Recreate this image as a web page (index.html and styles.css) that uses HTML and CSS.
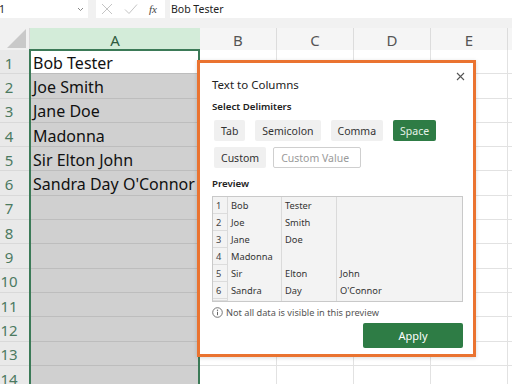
FILE: index.html
```html
<!DOCTYPE html>
<html>
<head>
<meta charset="utf-8">
<link rel="stylesheet" href="styles.css">
</head>
<body>
<div class="app">
  <div class="topbar">
    <div class="namebox"><span>1</span>
      <svg class="chev" width="7" height="5" viewBox="0 0 7 5"><path d="M1 1 L3.5 3.5 L6 1" fill="none" stroke="#888" stroke-width="1"/></svg>
    </div>
    <div class="fxbox">
      <svg width="12" height="12" viewBox="0 0 12 12"><path d="M1 1 L11 11 M11 1 L1 11" stroke="#c4c4c4" stroke-width="1" fill="none"/></svg>
      <svg width="14" height="12" viewBox="0 0 14 12"><path d="M1 6.5 L5 10.5 L13 1.5" stroke="#c4c4c4" stroke-width="1" fill="none"/></svg>
      <span class="fx">fx</span>
    </div>
    <div class="formula">Bob Tester</div>
  </div>
  <div class="gapband"></div>
  <div class="sheet">
    <div class="corner"><div class="tri"></div></div>
    <div class="colh sel">A</div>
    <div class="colh">B</div>
    <div class="colh">C</div>
    <div class="colh">D</div>
    <div class="colh">E</div>
    <div class="colh last"></div>

    <div class="rowh">1</div><div class="ca active">Bob Tester</div><div class="c"></div><div class="c"></div><div class="c"></div><div class="c"></div><div class="c last"></div>
    <div class="rowh">2</div><div class="ca">Joe Smith</div><div class="c"></div><div class="c"></div><div class="c"></div><div class="c"></div><div class="c last"></div>
    <div class="rowh">3</div><div class="ca">Jane Doe</div><div class="c"></div><div class="c"></div><div class="c"></div><div class="c"></div><div class="c last"></div>
    <div class="rowh">4</div><div class="ca">Madonna</div><div class="c"></div><div class="c"></div><div class="c"></div><div class="c"></div><div class="c last"></div>
    <div class="rowh">5</div><div class="ca">Sir Elton John</div><div class="c"></div><div class="c"></div><div class="c"></div><div class="c"></div><div class="c last"></div>
    <div class="rowh">6</div><div class="ca">Sandra Day O'Connor</div><div class="c"></div><div class="c"></div><div class="c"></div><div class="c"></div><div class="c last"></div>
    <div class="rowh">7</div><div class="ca"></div><div class="c"></div><div class="c"></div><div class="c"></div><div class="c"></div><div class="c last"></div>
    <div class="rowh">8</div><div class="ca"></div><div class="c"></div><div class="c"></div><div class="c"></div><div class="c"></div><div class="c last"></div>
    <div class="rowh">9</div><div class="ca"></div><div class="c"></div><div class="c"></div><div class="c"></div><div class="c"></div><div class="c last"></div>
    <div class="rowh">10</div><div class="ca"></div><div class="c"></div><div class="c"></div><div class="c"></div><div class="c"></div><div class="c last"></div>
    <div class="rowh">11</div><div class="ca"></div><div class="c"></div><div class="c"></div><div class="c"></div><div class="c"></div><div class="c last"></div>
    <div class="rowh">12</div><div class="ca"></div><div class="c"></div><div class="c"></div><div class="c"></div><div class="c"></div><div class="c last"></div>
    <div class="rowh">13</div><div class="ca"></div><div class="c"></div><div class="c"></div><div class="c"></div><div class="c"></div><div class="c last"></div>
    <div class="rowh">14</div><div class="ca"></div><div class="c"></div><div class="c"></div><div class="c"></div><div class="c"></div><div class="c last"></div>

    <div class="selframe"></div>
  </div>

  <div class="dialog">
    <svg class="close" width="9" height="9" viewBox="0 0 9 9"><path d="M1 1 L8 8 M8 1 L1 8" stroke="#555" stroke-width="1.1" fill="none"/></svg>
    <div class="title">Text to Columns</div>
    <div class="label">Select Delimiters</div>
    <div class="btnrow">
      <span class="btn">Tab</span>
      <span class="btn">Semicolon</span>
      <span class="btn">Comma</span>
      <span class="btn on">Space</span>
    </div>
    <div class="btnrow row2">
      <span class="btn">Custom</span>
      <span class="input">Custom Value</span>
    </div>
    <div class="label plabel">Preview</div>
    <div class="preview">
      <div class="pn">1</div><div class="pc">Bob</div><div class="pc">Tester</div><div class="pc"></div>
      <div class="pn">2</div><div class="pc">Joe</div><div class="pc">Smith</div><div class="pc"></div>
      <div class="pn">3</div><div class="pc">Jane</div><div class="pc">Doe</div><div class="pc"></div>
      <div class="pn">4</div><div class="pc">Madonna</div><div class="pc"></div><div class="pc"></div>
      <div class="pn">5</div><div class="pc">Sir</div><div class="pc">Elton</div><div class="pc">John</div>
      <div class="pn">6</div><div class="pc">Sandra</div><div class="pc">Day</div><div class="pc">O'Connor</div>
      <div class="pn"></div><div class="pc"></div><div class="pc"></div><div class="pc"></div>
    </div>
    <div class="info">
      <svg width="11" height="11" viewBox="0 0 11 11"><circle cx="5.5" cy="5.5" r="4.8" fill="none" stroke="#666" stroke-width="0.9"/><circle cx="5.5" cy="3.2" r="0.7" fill="#666"/><path d="M5.5 4.8 V8.2" stroke="#666" stroke-width="1"/></svg>
      <span>Not all data is visible in this preview</span>
    </div>
    <div class="actions"><span class="apply">Apply</span></div>
  </div>
</div>
</body>
</html>
```
FILE: styles.css
```css
* { box-sizing: border-box; }
html, body { margin: 0; padding: 0; }
body {
  width: 512px; height: 384px; overflow: hidden;
  font-family: "Noto Sans", "Open Sans", sans-serif;
  background: #f3f3f3;
}
.app { position: relative; width: 512px; height: 384px; overflow: hidden; display: flex; flex-direction: column; }

.topbar { height: 18px; display: flex; background: #f1f1f1; flex: none; }
.namebox { width: 88px; background: #fff; display: flex; align-items: center; justify-content: space-between; padding: 0 4px 0 0; font-size: 10.5px; color: #222; }
.namebox span { margin-left: -1px; }
.fxbox { width: 69px; margin-left: 8px; background: #fff; display: flex; align-items: center; padding-left: 5px; gap: 11px; }
.fx { font-family: "Liberation Serif", serif; font-style: italic; font-size: 11px; color: #444; }
.formula { flex: 1; margin-left: 5px; background: #fff; font-size: 10.5px; color: #222; padding-left: 1px; line-height: 18px; }

.gapband { height: 10px; background: #f1f1f1; flex: none; }

.sheet {
  position: relative; flex: 1;
  display: grid;
  grid-template-columns: 30px 170px 77px 77px 77px 77px 4px;
  grid-template-rows: 22px repeat(14, 24.3px);
  background: #fff;
}
.corner { background: #f1f1f1; border-right: 1px solid #dadada; position: relative; }
.tri { position: absolute; right: 3px; bottom: 2px; width: 0; height: 0; border-left: 19px solid transparent; border-bottom: 19px solid #c9c9c9; }
.colh { background: #f5f5f5; border-right: 1px solid #dcdcdc; display: flex; align-items: center; justify-content: center; font-size: 15px; color: #555; padding-top: 1px; }
.colh.sel { background: #d3ecd9; color: #2f5b40; border-right: none; }
.colh.last { border-right: none; }
.rowh { background: #e9e9e9; border-bottom: 1px solid #d9d9d9; display: flex; align-items: center; justify-content: center; padding: 2px 12px 0 0; font-size: 15px; color: #4c7a61; }
.ca { background: #d0d0d0; border-bottom: 1px solid #bdbdbd; font-size: 16px; color: #111; padding: 2px 0 0 3px; display: flex; align-items: center; white-space: nowrap; }
.ca.active { background: #fff; }
.c { border-right: 1px solid #e2e2e2; border-bottom: 1px solid #e2e2e2; }
.c.last { border-right: none; }
.selframe { position: absolute; left: 29px; top: 21px; width: 171px; bottom: -4px; border: 2px solid #3b7a57; pointer-events: none; }

.dialog {
  position: absolute; left: 197px; top: 60px; width: 279px; height: 297px;
  background: #fff; border: 3px solid #ea7330;
  padding: 14px 10px 0 12px;
  box-shadow: 0 1px 4px rgba(0,0,0,0.15);
}
.close { position: absolute; right: 8px; top: 9px; }
.title { font-size: 11.5px; line-height: 16px; color: #222; }
.label { font-size: 9.7px; line-height: 14px; font-weight: 600; color: #222; margin-top: 7px; }
.btnrow { display: flex; gap: 10px; margin-top: 6px; padding-left: 2px; }
.btnrow.row2 { gap: 7px; }
.btn { height: 21px; padding: 0 7px; background: #f0f0f0; border-radius: 2px; font-size: 10.5px; color: #333; display: flex; align-items: center; }
.btn.on { background: #2e7c45; color: #e6f2e8; }
.input { width: 88px; height: 21px; border: 1px solid #cfcfcf; border-radius: 2px; font-size: 10.5px; color: #9a9a9a; padding-left: 7px; display: flex; align-items: center; }
.plabel { margin-top: 9px; }
.preview {
  margin-top: 5px; height: 106px; border: 1px solid #c9c9c9; background: #f3f3f3;
  display: grid; grid-template-columns: 15px 54px 55px 1fr; grid-template-rows: repeat(6, 17px) 1fr;
  overflow: hidden;
}
.pn { border-right: 1px solid #dadada; border-bottom: 1px solid #dcdcdc; font-size: 9.3px; color: #444; padding-left: 3px; display: flex; align-items: center; }
.pc { border-right: 1px solid #dadada; font-size: 9.3px; color: #333; padding-left: 3px; display: flex; align-items: center; white-space: nowrap; }
.pc:nth-child(4n) { border-right: none; }
.info { display: flex; align-items: center; gap: 3px; margin-top: 4px; height: 12px; font-size: 9.2px; color: #555; white-space: nowrap; }
.actions { display: flex; justify-content: flex-end; margin-top: 5px; }
.apply { width: 100px; height: 25px; background: #2e7c45; border-radius: 2px; color: #fff; font-size: 11px; display: flex; align-items: center; justify-content: center; }
```
